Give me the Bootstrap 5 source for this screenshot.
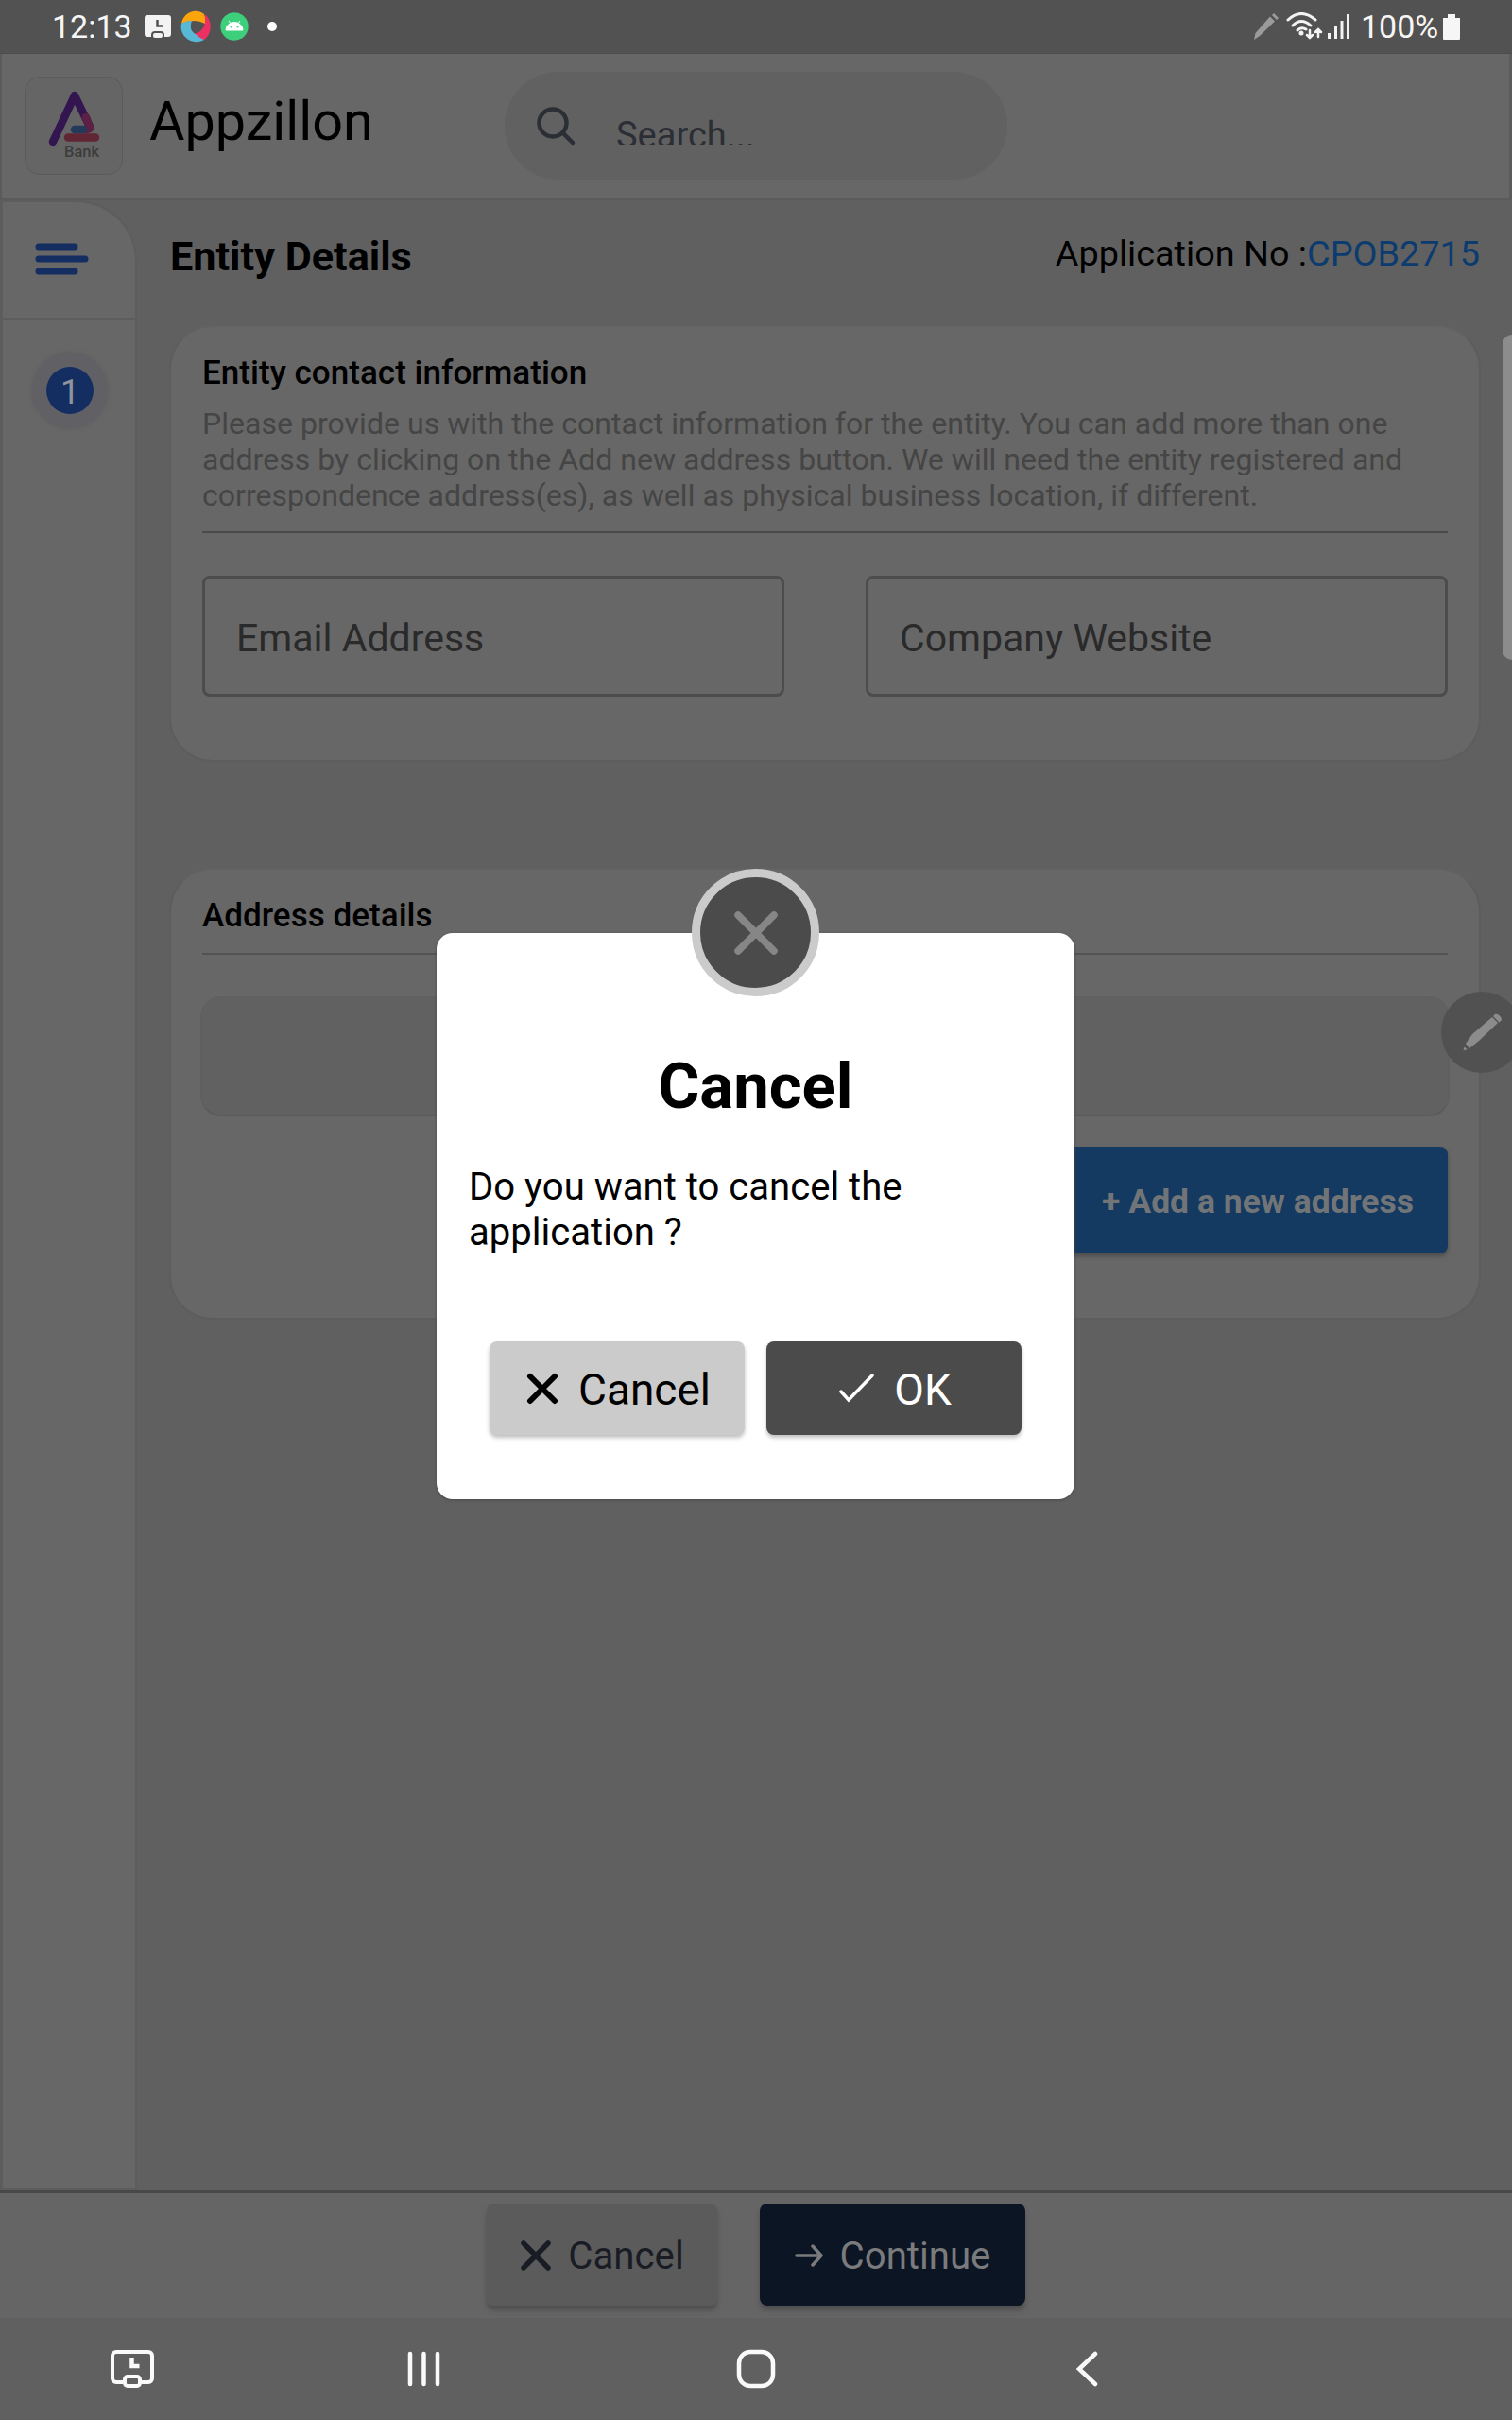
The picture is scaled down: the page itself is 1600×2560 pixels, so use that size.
<!DOCTYPE html>
<html lang="en">
<head>
<meta charset="utf-8">
<meta name="viewport" content="width=device-width, initial-scale=1">
<title>Appzillon</title>
<link href="https://cdn.jsdelivr.net/npm/bootstrap@5.3.0/dist/css/bootstrap.min.css" rel="stylesheet">
<style>
body{font-family:Roboto,"Liberation Sans",sans-serif;color:#000;background:#606060;margin:0}
svg{display:block;flex:none}
.device{width:1600px;height:2560px;background:#606060}
.statusbar{height:57px;background:#525252;color:#f6f6f6;padding:0 55px;font-size:34px;line-height:57px;border-bottom:1px solid #4d4d4d}
.topbar{height:155px;background:#676767;border:solid #5b5b5b;border-width:0 3px 3px 2px;padding:0 24px}
.logo-tile{width:104px;height:104px;border:1px solid #5b5b5b;border-radius:16px;background:#656565}
.brand-name{font-size:57.5px;line-height:70px;margin-left:28px;margin-top:-8px;width:376px}
.search-pill{width:532px;height:114px;border-radius:57px;background:#616161;padding-left:34px}
.search-text{font-size:38px;line-height:44px;height:32px;overflow:hidden;color:#2b2e35;margin:8px 0 0 43px}
.sidebar{width:144px;padding:2px 2px 0 3px;background:linear-gradient(#5c5c5c,#5c5c5c) 0 0/2px 100% no-repeat}
.rail{width:140px;height:2101px;background:#676767;border-top-right-radius:62px;box-shadow:0 0 0 2px #5d5d5d}
.rail-head{height:124px;border-bottom:2px solid #5d5d5d;padding:42px 0 0 34px}
.step-ring{width:80px;height:80px;background:#616165;box-shadow:0 0 4px #5c5c5c;margin:35px 0 0 31px}
.step-dot{width:50px;height:50px;background:#142e62;color:#8f949c;font-size:36px;line-height:54px}
.main-col{padding:0 33px 0 35px}
.page-head{height:132px;padding-left:1px}
.page-title{font-size:43.2px;line-height:50px;font-weight:700;margin:35px 0 0}
.app-no{font-size:37.8px;line-height:44px;margin:34px 1px 0 0}
.app-no span{color:#0c3b6f}
.panel{background:#676767;border:2px solid #5d5d5d;border-top-color:#626262;border-radius:46px;padding:0 33px}
.panel-contact{height:462px;margin-bottom:112px}
.panel-address{height:478px}
.panel-title{font-size:35.1px;line-height:42px;font-weight:500;margin:27px 0 0}
.panel-desc{font-size:32px;line-height:38px;letter-spacing:.03px;color:#454545;margin:14px 0 0;white-space:nowrap}
.rule{height:2px;background:#4a4a4a;margin-top:19px}
.rule-soft{background:#535353;margin-top:19px}
.field{width:616px;height:128px;border:3px solid #4c4c4c;border-radius:8px;color:#2a2a2a;font-size:41px;padding:5px 0 0 33px}
.empty-box{height:127px;margin:44px -2px 0 -2px;border-radius:22px;background:#616161;border:1px solid #5f5f5f;border-bottom:2px solid #5a5a5a}
.btn-add,.btn-add:hover{width:440px;height:113px;border-radius:8px;background:#153a61;color:#727577;font-size:35.5px;font-weight:700;box-shadow:0 3px 4px #4c4c4c;padding:11px 36px 6px 0;margin-top:32px;border:0}
.footbar{height:135px;background:#656565;border-top:3px solid #484848;padding:11px 0 0 515px;gap:45px}
.fbtn{height:108px;border-radius:8px;border:0;padding:2px 0 0;font-size:40.2px;box-shadow:0 5px 5px #505050}
.fbtn span{padding-top:2px}
.fbtn-cancel{width:244px;background:#5b5b5b;color:#191c24}
.fbtn-go{width:281px;background:#0c1523;color:#7a7b7d}
.navkeys{height:107px;padding-left:116px}
.dialog-box{left:462px;top:987px;width:675px;height:599px;background:#fff;border-radius:17px;padding:0 34px;box-shadow:0 1px 3px #4a4a4a}
.dialog-x{left:270px;top:-68px;width:135px;height:135px;border:9px solid #cbcbcb;background:#4b4b4b}
.dialog-title{font-size:67px;line-height:76px;font-weight:700;margin:124px 0 0}
.dialog-msg{font-size:40.1px;line-height:48px;margin:45px 0 0}
.dialog-actions{padding:0 22px;margin-top:91px;gap:23px}
.dbtn{width:270px;height:99px;border-radius:8px;border:0;font-size:46px;padding:4px 0 0 3px;box-shadow:0 3px 4px rgba(0,0,0,.25)}
.dbtn svg{margin-top:-4px}
.dbtn-no{background:#cbcbcb;color:#000}
.dbtn-yes{background:#4b4b4b;color:#fff}
.edge-handle{left:1590px;top:354px;width:20px;height:344px;border-radius:10px;background:#8c8c8c}
.edge-pen{left:1525px;top:1049px;width:86px;height:86px;background:#515151}
</style>
</head>
<body>
<div class="device position-relative overflow-hidden d-flex flex-column">
  <div class="statusbar d-flex justify-content-between flex-shrink-0">
    <div class="d-flex align-items-center">
      <span style="width:97px">12:13</span>
      <svg width="30" height="26" viewBox="0 0 30 26"><path d="M4 1h22a3 3 0 0 1 3 3v17a3 3 0 0 1-3 3h-4v-2a4 4 0 0 0-4-4h-6a4 4 0 0 0-4 4v2H4a3 3 0 0 1-3-3V4a3 3 0 0 1 3-3z" fill="#f3f3f3"/><path d="M14.500 6v6.500h6" fill="none" stroke="#525252" stroke-width="2.500"/><rect x="10" y="20" width="10" height="5" rx="2" fill="#f3f3f3"/></svg>
      <svg style="margin-left:7px" width="36" height="34" viewBox="-18 -17 36 34"><path d="M-15-3C-13-15 0-20 9-13Q11-9 10-3Q-1-9-15-3z" fill="#fba50c"/><path d="M9-13C18-8 18 8 9 14Q2 14-4 8Q8 7 10-4Q11-9 9-13z" fill="#ee2f63"/><path d="M-15-3Q-11-6-4-6Q-8 4 1 9Q5 13 9 14C-4 21-18 10-15-3z" fill="#58b9d6"/><circle cx="1" cy="0" r="5" fill="#525252"/></svg>
      <svg style="margin-left:8px" width="30" height="30" viewBox="0 0 30 30"><circle cx="15" cy="15" r="14.7" fill="#3ecf7d"/><path d="M6 19a9 8.500 0 0 1 18 0zM9 9l3 4M21 9l-3 4" fill="#fff" stroke="#fff" stroke-width="1"/><circle cx="11.500" cy="15.500" r="1" fill="#3ecf7d"/><circle cx="18.500" cy="15.500" r="1" fill="#3ecf7d"/></svg>
      <svg style="margin-left:20px" width="10" height="10"><circle cx="5" cy="5" r="5" fill="#fff"/></svg>
    </div>
    <div class="d-flex align-items-center">
      <svg width="28" height="30" viewBox="0 0 28 30"><path d="M1 29l1.500-7L18 4.500l5 5L7 25zM20 3l2-2 5 5-2 2z" fill="#9b9b9b"/></svg>
      <svg style="margin-left:7px" width="40" height="30" viewBox="0 0 40 30"><g fill="none" stroke="#f3f3f3" stroke-width="3" stroke-linecap="round"><path d="M2 8q14-13 29 0M7 14q9-9 19 0M12 19q4-4 9-1"/><path stroke-width="2.500" d="M25 19v8m-3-3l3 3 3-3M34 26v-8m-3 3l3-3 3 3"/></g><circle cx="16" cy="22" r="2.500" fill="#f3f3f3"/></svg>
      <svg style="margin-left:4px" width="25" height="28"><path d="M0 21h3v6H0zM7 14h3v13H7zM13.500 8h3v19h-3zM20 1h3v26h-3z" fill="#f3f3f3"/></svg>
      <span style="margin-left:10px;width:87px">100%</span>
      <svg width="18" height="29"><path d="M5 1h8v4h5v22q0 1-1 1H1q-1 0-1-1V5h5z" fill="#f6f6f6"/></svg>
    </div>
  </div>

  <header class="topbar d-flex align-items-center flex-shrink-0">
    <div class="logo-tile">
      <svg width="102" height="102" viewBox="28 82 102 102"><g fill="none" stroke-width="8.500" stroke-linecap="round" stroke-linejoin="round"><path d="M57 150L80 101l16 33" stroke="#331650"/><path d="M92 124l4 11q0 2-5 2" stroke="#5c2044"/><path d="M80 137h9" stroke="#243a5a"/><path d="M73 145.500h29" stroke="#602634"/></g><text x="69" y="166" font-size="16.500" font-weight="500" fill="#3c3c3c" font-family="Roboto">Bank</text></svg>
    </div>
    <div class="brand-name">Appzillon</div>
    <div class="search-pill d-flex align-items-center">
      <svg width="41" height="41" viewBox="0 0 41 41" fill="none" stroke="#2b2e35" stroke-width="4.500" stroke-linecap="round"><circle cx="17" cy="17" r="14.500"/><path d="M28 28l10 10"/></svg>
      <div class="search-text">Search...</div>
    </div>
  </header>

  <div class="d-flex" style="height:2105px">
    <aside class="sidebar flex-shrink-0">
      <div class="rail">
        <div class="rail-head"><svg width="57" height="36"><path d="M4 5h38M4 18h49M4 31h38" stroke="#142e62" stroke-width="7" stroke-linecap="round"/></svg></div>
        <div class="step-ring rounded-circle d-flex align-items-center justify-content-center"><div class="step-dot rounded-circle text-center">1</div></div>
      </div>
    </aside>
    <main class="main-col flex-grow-1">
      <div class="page-head d-flex justify-content-between">
        <h1 class="page-title">Entity Details</h1>
        <div class="app-no">Application No :<span>CPOB2715</span></div>
      </div>
      <section class="panel panel-contact d-flex flex-column">
        <h2 class="panel-title">Entity contact information</h2>
        <p class="panel-desc">Please provide us with the contact information for the entity. You can add more than one<br>address by clicking on the Add new address button. We will need the entity registered and<br>correspondence address(es), as well as physical business location, if different.</p>
        <div class="rule"></div>
        <div class="d-flex justify-content-between" style="margin-top:45px">
          <div class="field d-flex align-items-center">Email Address</div>
          <div class="field d-flex align-items-center">Company Website</div>
        </div>
      </section>
      <section class="panel panel-address d-flex flex-column">
        <h2 class="panel-title">Address details</h2>
        <div class="rule rule-soft"></div>
        <div class="empty-box"></div>
        <button class="btn btn-add text-end align-self-end">+ Add a new address</button>
      </section>
    </main>
  </div>

  <footer class="footbar d-flex flex-shrink-0">
    <button class="btn fbtn fbtn-cancel d-flex align-items-center justify-content-center"><svg width="34" height="34" viewBox="0 0 34 34"><path d="M4 4l26 26M30 4L4 30" stroke="#191c24" stroke-width="5.500" stroke-linecap="round"/></svg><span style="margin-left:17px">Cancel</span></button>
    <button class="btn fbtn fbtn-go d-flex align-items-center justify-content-center"><svg width="30" height="24" viewBox="0 0 30 24"><path d="M2 12h26M19 2l9 10-9 10" fill="none" stroke="#7a7b7d" stroke-width="3.500" stroke-linecap="round" stroke-linejoin="round"/></svg><span style="margin-left:18px">Continue</span></button>
  </footer>

  <nav class="navkeys d-flex align-items-center flex-shrink-0">
    <svg width="48" height="42" viewBox="0 0 48 42" fill="none" stroke="#fafafa" stroke-width="4"><path d="M14 35H7a4 4 0 0 1-4-4V7a4 4 0 0 1 4-4h34a4 4 0 0 1 4 4v24a4 4 0 0 1-4 4h-7"/><path d="M23.500 9v9h8" stroke-width="4.500"/><rect x="16" y="29" width="16" height="10" rx="3"/></svg>
    <svg style="margin-left:266px" width="38" height="40"><path d="M4 4v32M18.500 4v32M33 4v32" stroke="#fafafa" stroke-width="4.500" stroke-linecap="round"/></svg>
    <svg style="margin-left:311px" width="42" height="42"><rect x="3" y="3" width="36" height="36" rx="12" fill="none" stroke="#fafafa" stroke-width="4.500"/></svg>
    <svg style="margin-left:317px" width="24" height="40"><path d="M21 4L4 20l17 16" fill="none" stroke="#fafafa" stroke-width="4.500" stroke-linecap="round"/></svg>
  </nav>

  <div class="edge-handle position-absolute"></div>
  <div class="edge-pen position-absolute rounded-circle"><svg width="86" height="86"><path d="M23.500 62.500l1-4 3 2.500zM26 55l7-10 21-18 6 6-20 19-10 8zM55 26l2.500-2.500q6 1 6.500 6.500l-2.500 2.500z" fill="#8c8c8c"/></svg></div>

  <div class="dialog-box position-absolute" role="dialog">
    <div class="dialog-x position-absolute rounded-circle d-flex align-items-center justify-content-center"><svg width="50" height="50"><path d="M6 6l38 38M44 6L6 44" stroke="#868686" stroke-width="7.500" stroke-linecap="round"/></svg></div>
    <h2 class="dialog-title text-center">Cancel</h2>
    <p class="dialog-msg">Do you want to cancel the<br>application ?</p>
    <div class="dialog-actions d-flex">
      <button class="btn dbtn dbtn-no d-flex align-items-center justify-content-center"><svg width="34" height="34" viewBox="0 0 34 34"><path d="M4 4l26 26M30 4L4 30" stroke="#000" stroke-width="6" stroke-linecap="round"/></svg><span style="margin-left:21px">Cancel</span></button>
      <button class="btn dbtn dbtn-yes d-flex align-items-center justify-content-center"><svg width="38" height="32"><path d="M2 19l8 9L35 2" fill="none" stroke="#fff" stroke-width="3.500" stroke-linecap="round"/></svg><span style="margin-left:20px">OK</span></button>
    </div>
  </div>
</div>
<script src="https://cdn.jsdelivr.net/npm/bootstrap@5.3.0/dist/js/bootstrap.bundle.min.js"></script>
</body>
</html>
